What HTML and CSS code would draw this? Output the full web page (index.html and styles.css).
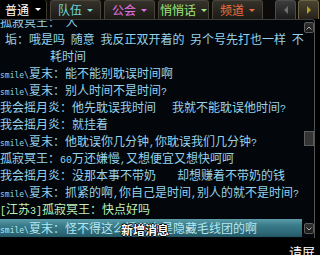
FILE: index.html
```html
<!DOCTYPE html>
<html lang="zh-CN">
<head>
<meta charset="utf-8">
<link rel="stylesheet" href="styles.css">
</head>
<body>
<div class="tabs">
  <div class="tab active"><span>普通</span><i class="caret"></i></div>
  <div class="tab team"><span>队伍</span><i class="caret"></i></div>
  <div class="tab guild"><span>公会</span><i class="caret"></i></div>
  <div class="tab whisper"><span>悄悄话</span><i class="caret"></i></div>
  <div class="tab channel"><span>频道</span><i class="caret"></i></div>
  <div class="nav prev"><i class="arr-l"></i></div>
  <div class="nav next"><i class="arr-r"></i></div>
</div>
<div class="chat">
  <div class="log">
    <div class="lines">
      <div class="msg">孤寂冥王<span class="c">：</span> 人</div>
      <div class="msg ind1">垢<span class="c">：</span>哦是吗 随意 我反正双开着的 另个号先打也一样 不</div>
      <div class="msg ind2">耗时间</div>
      <div class="msg"><span class="en">smile\</span>夏末<span class="c">：</span>能不能别耽误时间啊</div>
      <div class="msg"><span class="en">smile\</span>夏末<span class="c">：</span>别人时间不是时间<span class="a">?</span></div>
      <div class="msg">我会摇月炎<span class="c">：</span>他先耽误我时间<span class="gap1"></span>我就不能耽误他时间<span class="a">?</span></div>
      <div class="msg">我会摇月炎<span class="c">：</span>就挂着</div>
      <div class="msg"><span class="en">smile\</span>夏末<span class="c">：</span>他耽误你几分钟<span class="a">,</span>你耽误我们几分钟<span class="a">?</span></div>
      <div class="msg">孤寂冥王<span class="c">：</span><span class="a">60</span>万还嫌慢<span class="a">,</span>又想便宜又想快呵呵</div>
      <div class="msg">我会摇月炎<span class="c">：</span>没那本事不带奶<span class="gap2"></span>却想赚着不带奶的钱</div>
      <div class="msg"><span class="en">smile\</span>夏末<span class="c">：</span>抓紧的啊<span class="a">,</span>你自己是时间<span class="a">,</span>别人的就不是时间<span class="a">?</span></div>
      <div class="msg green"><span class="a">[</span>江苏<span class="a">3]</span>孤寂冥王<span class="c">：</span>快点好吗</div>
      <div class="msg hl"><span class="en">smile\</span>夏末<span class="c">：</span>怪不得这么慢原来是隐藏毛线团的啊</div>
    </div>
    <div class="notice"><span>新增消息</span><i class="tri"></i></div>
  </div>
  <div class="scroll">
    <div class="sbtn"><svg width="6" height="4" viewBox="0 0 6 4"><path d="M0.5 3.5 L3 1 L5.5 3.5" fill="none" stroke="#b0b0b0" stroke-width="1"/></svg></div>
    <div class="track"><div class="thumb"></div></div>
    <div class="sbtn"><svg width="6" height="4" viewBox="0 0 6 4"><path d="M0.5 0.5 L3 3 L5.5 0.5" fill="none" stroke="#b0b0b0" stroke-width="1"/></svg></div>
  </div>
</div>
<div class="footer">请屏</div>
</body>
</html>
```
FILE: styles.css
```css
* { box-sizing: border-box; margin: 0; padding: 0; }
html, body { background: #000; }
body {
  width: 320px;
  height: 255px;
  overflow: hidden;
  font-family: "Noto Sans CJK SC", sans-serif;
}
.tabs {
  display: flex;
  height: 19px;
  background: #0c0b09;
}
.tab {
  width: 51px;
  margin-left: 3px;
  display: flex;
  align-items: center;
  justify-content: center;
  gap: 5px;
  font-size: 12px;
  line-height: 14px;
  border: 1px solid #48443a;
  border-bottom: none;
  border-radius: 3px 3px 0 0;
  background: linear-gradient(#35322a, #1c1a15);
}
.tab.active {
  width: 47px;
  margin-left: 0;
  border: none;
  border-right: 1px solid #3e3a30;
  background: #000;
  color: #fff;
  justify-content: flex-start;
  padding-left: 5px;
  gap: 6px;
}
.team { color: #72d6d2; }
.guild { color: #e472e6; }
.whisper { color: #9ce87e; }
.channel { color: #f26c3c; }
.caret {
  width: 0;
  height: 0;
  border-left: 3px solid transparent;
  border-right: 3px solid transparent;
  border-top: 3px solid currentColor;
}
.nav {
  width: 21px;
  margin-left: 2px;
  display: flex;
  align-items: center;
  justify-content: center;
  border: 1px solid #4c4c4c;
  border-bottom: none;
  border-radius: 3px 3px 0 0;
  background: linear-gradient(#3c3c3c, #1c1c1c);
}
.nav.prev { margin-left: 12px; }
.nav.next {
  border-color: #6c6444;
  background: linear-gradient(#4a4430, #26221a);
}
.arr-l {
  border-top: 4px solid transparent;
  border-bottom: 4px solid transparent;
  border-right: 4px solid #6e6e6e;
}
.arr-r {
  border-top: 4px solid transparent;
  border-bottom: 4px solid transparent;
  border-left: 4px solid #b0a020;
}
.chat {
  display: flex;
  width: 315px;
  height: 219px;
  border-top: 1px solid #3c3c3c;
  border-right: 1px solid #545454;
  border-top-right-radius: 3px;
  background: #03070b;
}
.log {
  position: relative;
  width: 304px;
  overflow: hidden;
}
.lines { margin-top: -7px; }
.msg {
  height: 17px;
  line-height: 17px;
  font-size: 12px;
  color: #96d2ea;
  white-space: pre;
  word-spacing: 3px;
}
.ind1 { padding-left: 5px; }
.ind2 { padding-left: 50px; }
.en {
  font-family: "DejaVu Sans Mono", monospace;
  font-size: 8px;
  word-spacing: 0;
}
.a {
  font-family: "Liberation Mono", monospace;
  font-size: 10px;
}
.c { font-family: "Noto Sans CJK TC", sans-serif; }
.gap1 { display: inline-block; width: 16px; }
.gap2 { display: inline-block; width: 21px; }
.green { color: #bff0b8; }
.msg.hl {
  margin-top: 2px;
  margin-right: 2px;
  height: 18px;
  line-height: 18px;
  color: #b2e8f4;
  background: linear-gradient(#5a9ca8, #3a7c8a 35%, #2c6674 80%, #245664);
}
.notice {
  position: absolute;
  left: 121px;
  top: 201px;
  display: flex;
  align-items: center;
  font-size: 12px;
  line-height: 17px;
  font-weight: bold;
  color: #fff;
  text-shadow: -1px 0 #000, 1px 0 #000, 0 -1px #000, 0 1px #000;
}
.tri {
  margin-left: 17px;
  width: 0;
  height: 0;
  border-left: 3.5px solid transparent;
  border-right: 3.5px solid transparent;
  border-top: 5px solid #c4d6de;
}
.scroll {
  width: 10px;
  display: flex;
  flex-direction: column;
  padding: 2px 0 4px;
}
.sbtn {
  height: 11px;
  display: flex;
  align-items: center;
  justify-content: center;
  border: 1px solid #5c5c5c;
  border-radius: 2px;
  background: linear-gradient(#303030, #1a1a1a);
}
.track { flex: 1; padding-top: 98px; }
.thumb {
  height: 15px;
  border: 1px solid #5c5c5c;
  background: #343434;
}
.footer {
  height: 17px;
  display: flex;
  justify-content: flex-end;
  padding: 7px 5px 0 0;
  color: #fff;
  font-size: 13px;
  line-height: 14px;
}
```
